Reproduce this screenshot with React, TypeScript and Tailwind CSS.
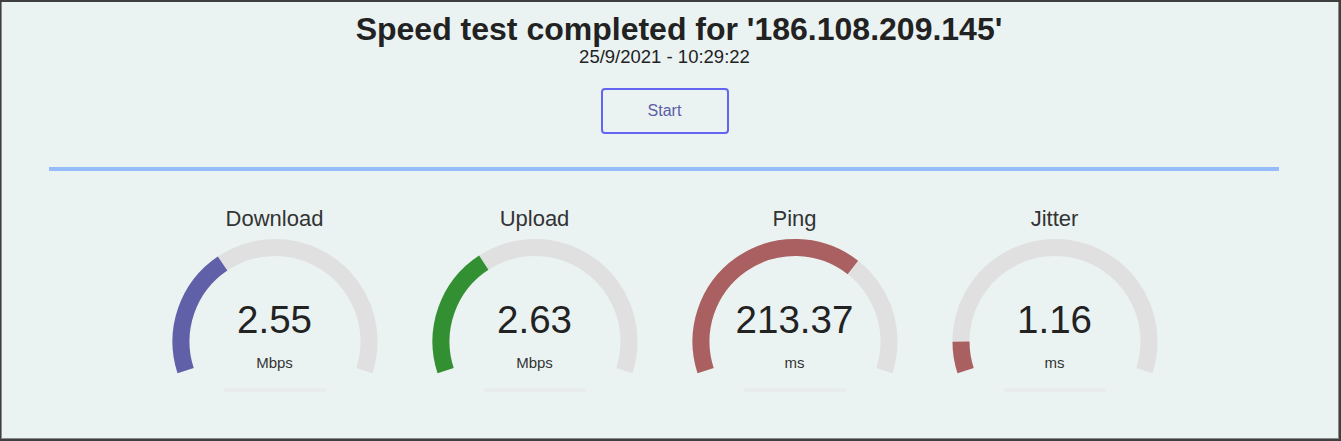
import React from "react";

type G = { label: string; value: string; unit: string; frac: number; color: string };

const gauges: G[] = [
  { label: "Download", value: "2.55", unit: "Mbps", frac: 0.343, color: "#6060a8" },
  { label: "Upload", value: "2.63", unit: "Mbps", frac: 0.347, color: "#329032" },
  { label: "Ping", value: "213.37", unit: "ms", frac: 0.676, color: "#aa6060" },
  { label: "Jitter", value: "1.16", unit: "ms", frac: 0.083, color: "#aa6060" },
];

const CX = 105;
const CY = 104.5;
const R = 94;

function pt(deg: number) {
  const a = (deg * Math.PI) / 180;
  return [CX + R * Math.cos(a), CY - R * Math.sin(a)];
}

function arc(from: number, to: number) {
  const [x1, y1] = pt(from);
  const [x2, y2] = pt(to);
  const large = from - to > 180 ? 1 : 0;
  return `M ${x1.toFixed(2)} ${y1.toFixed(2)} A ${R} ${R} 0 ${large} 1 ${x2.toFixed(2)} ${y2.toFixed(2)}`;
}

function Gauge({ g }: { g: G }) {
  const end = 198 - 216 * g.frac;
  return (
    <div className="flex w-[260px] flex-col items-center">
      <div className="h-[26px] text-[22px] leading-[26px] text-[#333]">{g.label}</div>
      <div className="relative mt-[5px] h-[140px] w-[210px]">
        <svg width="210" height="140" viewBox="0 0 210 140">
          <path d={arc(198, -18)} fill="none" stroke="#e0e0e0" strokeWidth="17" />
          <path d={arc(198, end)} fill="none" stroke={g.color} strokeWidth="17" />
        </svg>
        <div className="absolute left-0 right-0 top-[61px] h-[44px] text-center text-[38.5px] leading-[44px] text-[#222]">
          {g.value}
        </div>
        <div className="absolute left-0 right-0 top-[116px] h-[20px] text-center text-[15px] leading-[20px] text-[#333]">
          {g.unit}
        </div>
      </div>
      <div className="mt-[11px] h-[4px] w-[102px] bg-[#e9ecec]" />
    </div>
  );
}

export default function App() {
  return (
    <div
      className="h-[441px] w-[1341px] overflow-hidden border-b-2 border-l border-r-2 border-t-2 border-[#3f3f3f] bg-[#eaf3f2]"
      style={{ fontFamily: '"Liberation Sans", Arial, sans-serif' }}
    >
      <div className="h-full border-b border-l border-r border-[#8a8a8a]">
        <div className="flex w-[1325px] flex-col items-center">
          <div className="mt-[9px] h-[36px] pl-[29px] text-[32px] font-bold leading-[36px] text-[#222]">
            Speed test completed for '186.108.209.145'
          </div>
          <div className="mt-[-1px] h-[22px] text-[18.5px] leading-[22px] text-[#222]">25/9/2021 - 10:29:22</div>
          <button className="mt-[20px] flex h-[46px] w-[128px] items-center justify-center rounded-[4px] border-2 border-[#6464f2] bg-transparent text-[16px] text-[#5c5ca8]">
            Start
          </button>
          <div className="ml-[-1px] mt-[33px] h-[4px] w-[1230px] bg-[#94bdfa]" />
          <div className="mt-[35px] flex justify-center">
            {gauges.map((g) => (
              <Gauge key={g.label} g={g} />
            ))}
          </div>
        </div>
      </div>
    </div>
  );
}
